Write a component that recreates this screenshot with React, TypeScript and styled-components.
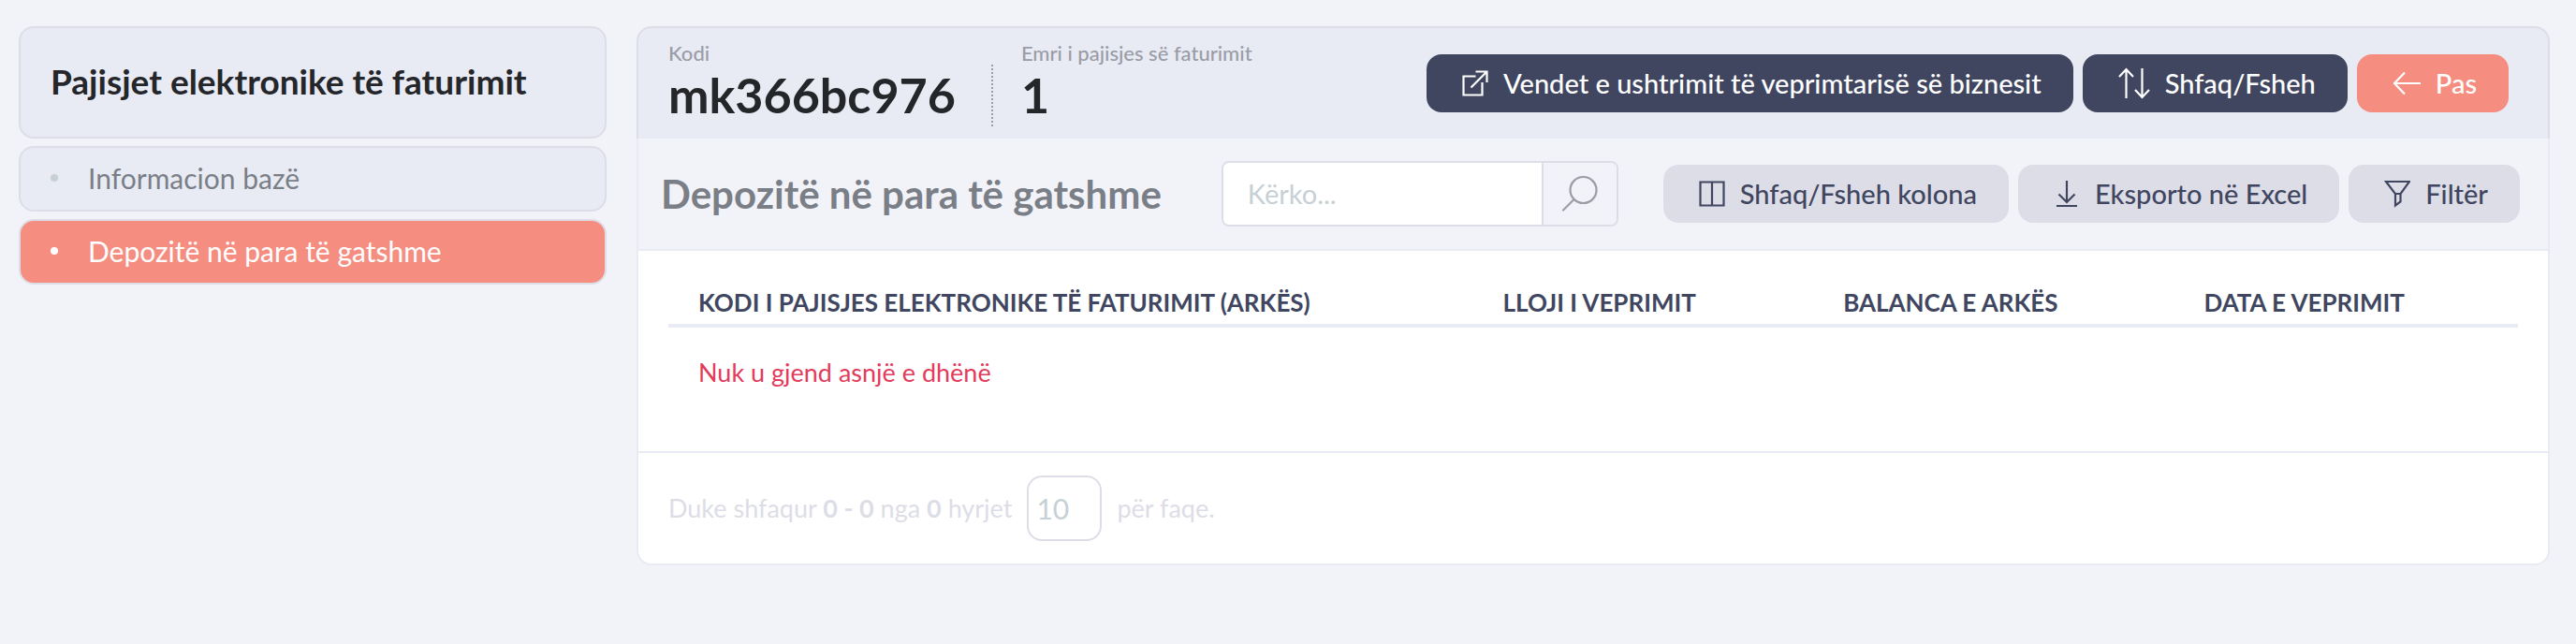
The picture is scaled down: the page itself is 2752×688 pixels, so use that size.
import React from 'react';
import styled, { createGlobalStyle, css } from 'styled-components';

const color = {
  page: '#f2f3f9',
  card: '#e8ebf4',
  line: '#dddde7',
  navy: '#40465f',
  coral: '#f58d80',
  ink: '#25262a',
  grey: '#7a7f87',
  label: '#9a9ca6',
  pale: '#c6d0d5',
  danger: '#e33b5c',
};

const GlobalStyle = createGlobalStyle`
  *, *::before, *::after { box-sizing: border-box; }
  body { margin: 0; background: ${color.page}; color: ${color.ink}; }
  body, button, input { font-family: Lato, "Open Sans", sans-serif; }
`;

const Page = styled.div`
  display: grid;
  grid-template-columns: 628px minmax(0, 1fr);
  gap: 32px;
  align-items: start;
  padding: 28px 28px 28px 20px;
`;

const Sidebar = styled.nav`
  display: flex;
  flex-direction: column;
  gap: 8px;
`;

const SidebarTitle = styled.h2`
  display: flex;
  align-items: center;
  min-height: 120px;
  margin: 0;
  padding: 0 32px 2px;
  border: 2px solid ${color.line};
  border-radius: 16px;
  background: ${color.card};
  font-size: 37px;
  line-height: 44px;
  font-weight: 700;
`;

const SidebarLink = styled.a<{ $active?: boolean }>`
  display: flex;
  align-items: center;
  gap: 32px;
  min-height: 70px;
  padding: 0 32px 2px;
  border: 2px solid ${color.line};
  border-radius: 16px;
  background: ${p => (p.$active ? color.coral : color.card)};
  color: ${p => (p.$active ? '#fff' : color.grey)};
  font-size: 30px;
  line-height: 36px;
  text-decoration: none;

  &::before {
    content: '';
    width: 8px;
    height: 8px;
    border-radius: 50%;
    background: ${p => (p.$active ? '#fff' : color.pale)};
  }
`;

const Header = styled.header`
  display: flex;
  align-items: center;
  justify-content: space-between;
  min-height: 120px;
  padding: 0 42px 0 32px;
  border: 2px solid ${color.line};
  border-bottom: 0;
  border-radius: 16px 16px 0 0;
  background: ${color.card};
`;

const Facts = styled.dl`
  display: flex;
  margin: 0;
  padding-bottom: 4px;
`;

const Fact = styled.div`
  position: relative;
  padding-right: 38px;

  & + & { padding-left: 32px; }

  & + &::before {
    content: '';
    position: absolute;
    left: 0;
    top: 26px;
    bottom: -4px;
    border-left: 2px dotted ${color.label};
  }
`;

const FactLabel = styled.dt`
  font-size: 22px;
  line-height: 28px;
  font-weight: 500;
  color: ${color.label};
`;

const FactValue = styled.dd`
  margin: 0;
  font-size: 52px;
  line-height: 60px;
  font-weight: 700;
`;

const Actions = styled.div`
  display: flex;
  gap: 10px;
`;

const tones = {
  navy: css`background: ${color.navy}; color: #fff;`,
  coral: css`background: ${color.coral}; color: #fff;`,
  soft: css`background: ${color.line}; color: ${color.navy};`,
};

const Button = styled.button<{ $tone: keyof typeof tones }>`
  display: flex;
  align-items: center;
  gap: 16px;
  height: 62px;
  padding: 0 34px 0 38px;
  border: 0;
  border-radius: 16px;
  font-size: 29px;
  line-height: 36px;
  font-weight: 500;
  white-space: nowrap;
  ${p => tones[p.$tone]}
`;

const Icon = styled.svg`
  flex: none;
  fill: none;
  stroke: currentColor;
  stroke-width: 2.2;
`;

const Panel = styled.section`
  border: 2px solid ${color.card};
  border-top: 0;
  border-radius: 0 0 16px 16px;
  background: #fff;
  overflow: hidden;
`;

const Toolbar = styled.div`
  display: flex;
  align-items: center;
  min-height: 120px;
  padding: 0 30px 0 24px;
  border-bottom: 2px solid ${color.card};
  background: ${color.page};
`;

const Title = styled.h1`
  margin: 0 64px 0 0;
  font-size: 42px;
  line-height: 48px;
  font-weight: 700;
  color: ${color.grey};
`;

const Search = styled.form`
  display: flex;
  width: 424px;
  height: 70px;
  margin-right: auto;
  border: 2px solid ${color.line};
  border-radius: 8px;
  overflow: hidden;
`;

const SearchInput = styled.input`
  flex: 1;
  min-width: 0;
  padding: 0 26px 2px;
  border: 0;
  background: #fff;
  font-size: 29px;

  &::placeholder { color: ${color.pale}; opacity: 1; }
`;

const SearchButton = styled.button`
  display: grid;
  place-items: center;
  width: 80px;
  padding: 0;
  border: 0;
  border-left: 2px solid ${color.line};
  background: ${color.page};
  color: ${color.label};
`;

const TableWrap = styled.div`
  padding: 28px 32px 36px;
`;

const Table = styled.table`
  width: 100%;
  table-layout: fixed;
  border-collapse: collapse;
  text-align: left;
`;

const HeadCell = styled.th<{ $width: string }>`
  width: ${p => p.$width};
  height: 52px;
  padding: 4px 32px 0;
  border-bottom: 4px solid ${color.card};
  font-size: 26px;
  line-height: 30px;
  font-weight: 700;
  color: ${color.navy};
  text-transform: uppercase;
  white-space: nowrap;
`;

const EmptyCell = styled.td`
  height: 98px;
  padding: 0 32px;
  font-size: 27px;
  line-height: 32px;
  color: ${color.danger};
`;

const Footer = styled.footer`
  display: flex;
  align-items: center;
  gap: 16px;
  min-height: 120px;
  padding: 0 32px;
  border-top: 2px solid ${color.card};
  font-size: 27px;
  line-height: 32px;
  color: ${color.line};
`;

const PageSize = styled.input`
  width: 80px;
  height: 70px;
  padding: 0 8px;
  border: 2px solid ${color.line};
  border-radius: 16px;
  background: #fff;
  font-size: 30px;
  color: ${color.pale};
`;

const OpenIcon = () => (
  <Icon width="28" height="28" viewBox="0 0 28 28" aria-hidden="true">
    <path d="M14.500 6.500H1.500v20h20V13" />
    <path d="M14.500 1.500H26.500V13M26 2 9.500 18.500" />
  </Icon>
);

const SortIcon = () => (
  <Icon width="34" height="34" viewBox="0 0 34 34" aria-hidden="true">
    <path d="M8.500 33V2M1 10l7.500-8 7.500 8M25.500 1v31M18 24l7.500 8 7.500-8" />
  </Icon>
);

const BackIcon = () => (
  <Icon width="30" height="26" viewBox="0 0 30 26" aria-hidden="true">
    <path d="M30 13H2M13 1.500 2 13l11 11.500" />
  </Icon>
);

const ColumnsIcon = () => (
  <Icon width="28" height="28" viewBox="0 0 28 28" aria-hidden="true">
    <path d="M1.500 1.500h25v25h-25zM14 1.500v25" />
  </Icon>
);

const DownloadIcon = () => (
  <Icon width="28" height="30" viewBox="0 0 28 30" aria-hidden="true">
    <path d="M14 1v23M5.500 15.500l8.500 8.500 8.500-8.500M3 28h22" />
  </Icon>
);

const FilterIcon = () => (
  <Icon width="28" height="30" viewBox="0 0 28 30" aria-hidden="true">
    <path d="M2 2h25L17.500 15v8.500L12 27.500V15z" />
    <path d="M12 15h5.500" />
  </Icon>
);

const SearchIcon = () => (
  <Icon width="40" height="40" viewBox="0 0 40 40" strokeLinecap="round" aria-hidden="true">
    <circle cx="23.500" cy="16" r="14" />
    <path d="M13.500 26 2 37.500" />
  </Icon>
);

const columns = [
  { name: 'Kodi i pajisjes elektronike të faturimit (arkës)', width: '43.5%' },
  { name: 'Lloji i veprimit', width: '18.4%' },
  { name: 'Balanca e arkës', width: '19.5%' },
  { name: 'Data e veprimit', width: '18.6%' },
];

export default function App() {
  return (
    <>
      <GlobalStyle />
      <Page>
        <Sidebar>
          <SidebarTitle>Pajisjet elektronike të faturimit</SidebarTitle>
          <SidebarLink href="#info">Informacion bazë</SidebarLink>
          <SidebarLink href="#deposit" $active aria-current="page">Depozitë në para të gatshme</SidebarLink>
        </Sidebar>
        <main>
          <Header>
            <Facts>
              <Fact>
                <FactLabel>Kodi</FactLabel>
                <FactValue>mk366bc976</FactValue>
              </Fact>
              <Fact>
                <FactLabel>Emri i pajisjes së faturimit</FactLabel>
                <FactValue>1</FactValue>
              </Fact>
            </Facts>
            <Actions>
              <Button type="button" $tone="navy"><OpenIcon />Vendet e ushtrimit të veprimtarisë së biznesit</Button>
              <Button type="button" $tone="navy"><SortIcon />Shfaq/Fsheh</Button>
              <Button type="button" $tone="coral"><BackIcon />Pas</Button>
            </Actions>
          </Header>
          <Panel>
            <Toolbar>
              <Title>Depozitë në para të gatshme</Title>
              <Search role="search">
                <SearchInput type="text" placeholder="Kërko..." aria-label="Kërko" />
                <SearchButton type="button" aria-label="Kërko"><SearchIcon /></SearchButton>
              </Search>
              <Actions>
                <Button type="button" $tone="soft"><ColumnsIcon />Shfaq/Fsheh kolona</Button>
                <Button type="button" $tone="soft"><DownloadIcon />Eksporto në Excel</Button>
                <Button type="button" $tone="soft"><FilterIcon />Filtër</Button>
              </Actions>
            </Toolbar>
            <TableWrap>
              <Table>
                <thead>
                  <tr>
                    {columns.map(c => <HeadCell key={c.name} $width={c.width} scope="col">{c.name}</HeadCell>)}
                  </tr>
                </thead>
                <tbody>
                  <tr><EmptyCell colSpan={4}>Nuk u gjend asnjë e dhënë</EmptyCell></tr>
                </tbody>
              </Table>
            </TableWrap>
            <Footer>
              <label htmlFor="page-size">Duke shfaqur <b>0 - 0</b> nga <b>0</b> hyrjet</label>
              <PageSize id="page-size" type="text" defaultValue="10" />
              <span>për faqe.</span>
            </Footer>
          </Panel>
        </main>
      </Page>
    </>
  );
}
